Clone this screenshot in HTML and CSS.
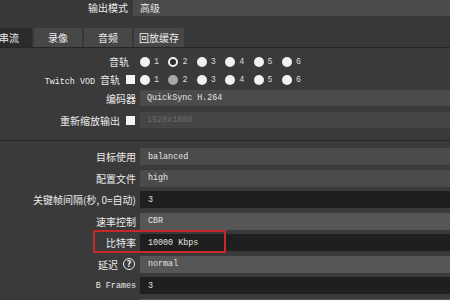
FILE: index.html
```html
<!DOCTYPE html>
<html>
<head>
    <meta charset="UTF-8" />
    <title>输出设置</title>
    <link rel="stylesheet" href="styles.css">
</head>

<body>
<div class="mode-row">
    <div class="mode-label">输出模式</div>
    <div class="field mode-field">高级</div>
</div>

<div class="tab-bar">
    <div class="tab active">串流</div>
    <div class="tab">录像</div>
    <div class="tab">音频</div>
    <div class="tab">回放缓存</div>
</div>

<div class="panel">
    <div class="form-top">
        <div class="row radio-row">
            <div class="label track-label">音轨</div>
            <div class="radios">
                <span class="radio-item"><span class="radio"></span>1</span>
                <span class="radio-item"><span class="radio checked"></span>2</span>
                <span class="radio-item"><span class="radio"></span>3</span>
                <span class="radio-item"><span class="radio"></span>4</span>
                <span class="radio-item"><span class="radio"></span>5</span>
                <span class="radio-item"><span class="radio"></span>6</span>
            </div>
        </div>
        <div class="row radio-row">
            <div class="label"><span class="label-text"><span class="latin">Twitch VOD </span>音轨</span><span class="checkbox"></span></div>
            <div class="radios">
                <span class="radio-item"><span class="radio"></span>1</span>
                <span class="radio-item"><span class="radio dim"></span>2</span>
                <span class="radio-item"><span class="radio"></span>3</span>
                <span class="radio-item"><span class="radio"></span>4</span>
                <span class="radio-item"><span class="radio"></span>5</span>
                <span class="radio-item"><span class="radio"></span>6</span>
            </div>
        </div>
        <div class="row field-row encoder-row">
            <div class="label">编码器</div>
            <div class="field">QuickSync H.264</div>
        </div>
        <div class="row field-row rescale-row">
            <div class="label">重新缩放输出<span class="checkbox"></span></div>
            <div class="field disabled">1920x1080</div>
        </div>
    </div>

    <div class="separator"></div>

    <div class="form-bottom">
        <div class="label">目标使用</div>
        <div class="field">balanced</div>

        <div class="label">配置文件</div>
        <div class="field">high</div>

        <div class="label">关键帧间隔(秒, 0=自动)</div>
        <div class="field spin">3</div>

        <div class="label">速率控制</div>
        <div class="field light">CBR</div>

        <div class="label highlight">比特率<span class="mark"></span></div>
        <div class="field spin">10000 Kbps</div>

        <div class="label">延迟<span class="help">?</span></div>
        <div class="field light">normal</div>

        <div class="label"><span class="latin">B Frames</span></div>
        <div class="field spin">3</div>

        <div class="label"></div>
        <div class="field light"></div>
    </div>
</div>
</body>
</html>
```

FILE: styles.css
```css
* {
    margin: 0;
    padding: 0;
    box-sizing: border-box;
}

:root {
    --bg: #3a3a3a;
    --top-bg: #383838;
    --field-bg: #4b4b4b;
    --field-light: #565656;
    --spin-bg: #1f1f1f;
    --tab-bg: #474747;
    --tab-active: #2b2b2b;
    --line: #262626;
    --text: #ececec;
    --mark: #c8282c;
}

body {
    width: 450px;
    height: 300px;
    overflow: hidden;
    background-color: var(--top-bg);
    color: var(--text);
    font-family: "Noto Sans CJK SC", "Noto Sans", sans-serif;
    font-size: 10px;
}

.latin,
.field,
.radio-item {
    font-family: "Liberation Mono", "DejaVu Sans Mono", monospace;
    font-size: 8.4px;
}

.latin {
    white-space: pre;
}

/* Output mode */
.mode-row {
    display: flex;
    align-items: center;
    height: 15px;
}

.mode-label {
    width: 128px;
    text-align: right;
}

.mode-field {
    flex: 1;
    height: 15px;
    margin-left: 5px;
    padding-left: 8px;
    font-family: "Noto Sans CJK SC", sans-serif;
    font-size: 10px;
}

/* Tabs */
.tab-bar {
    display: flex;
    gap: 2px;
    margin-top: 13px;
    height: 20px;
    border-bottom: 1px solid var(--line);
}

.tab {
    width: 48px;
    height: 19px;
    display: flex;
    align-items: center;
    justify-content: center;
    background-color: var(--tab-bg);
    border-radius: 2px 2px 0 0;
}

.tab.active {
    width: 33px;
    margin-left: -1px;
    justify-content: flex-start;
    background-color: var(--tab-active);
}

.tab:last-child {
    width: 50px;
}

/* Panel */
.panel {
    background-color: var(--bg);
    height: 252px;
    padding-top: 4px;
    overflow: hidden;
}

.row {
    display: flex;
    align-items: center;
}

.label {
    width: 136px;
    flex-shrink: 0;
    display: flex;
    align-items: center;
    justify-content: flex-end;
    white-space: nowrap;
}

.label-text {
    display: block;
    margin-top: 1px;
}

.radio-row {
    height: 18px;
}

.track-label {
    padding-right: 7px;
}

.checkbox {
    width: 9px;
    height: 9px;
    margin-left: 6px;
    margin-right: 1px;
    background-color: #f4f4f4;
}

.radios {
    display: flex;
    margin-left: 4px;
    margin-top: 2px;
}

.radio-item {
    width: 28.4px;
    display: flex;
    align-items: center;
    gap: 4px;
    color: #dcdcdc;
}

.radio {
    width: 10px;
    height: 10px;
    border-radius: 50%;
    background-color: #f2f2f2;
}

.radio.checked {
    background-color: #2a2a2a;
    border: 2px solid #f2f2f2;
}

.radio.dim {
    background-color: #a8a8a8;
}

.field-row .field {
    flex: 1;
    margin-left: 4px;
}

.encoder-row {
    margin-top: 2px;
}

.rescale-row {
    margin-top: 6px;
}

.field {
    height: 16px;
    display: flex;
    align-items: center;
    padding-left: 7px;
    background-color: var(--field-bg);
    border-radius: 1px;
    color: #e4e4e4;
    white-space: nowrap;
}

.field.disabled {
    background-color: #454545;
    color: #6c6c6c;
}

.field.light {
    background-color: var(--field-light);
}

.field.spin {
    background-color: var(--spin-bg);
}

.separator {
    height: 1px;
    margin-top: 12px;
    background-color: var(--line);
}

/* Stream settings */
.form-bottom {
    display: grid;
    grid-template-columns: 136px 1fr;
    grid-auto-rows: 17px;
    column-gap: 4px;
    row-gap: 4.5px;
    margin-top: 7px;
}

.form-bottom .field {
    height: 17px;
    padding-left: 8px;
}

.help {
    width: 12px;
    height: 12px;
    margin-left: 5px;
    margin-right: 1px;
    border: 1.5px solid #eeeeee;
    border-radius: 50%;
    display: flex;
    align-items: center;
    justify-content: center;
    font-family: "DejaVu Sans", sans-serif;
    font-size: 8px;
    font-weight: bold;
}

/* Red annotation around the bitrate row */
.highlight {
    position: relative;
}

.mark {
    position: absolute;
    left: 93px;
    top: -4px;
    width: 133px;
    height: 23px;
    border: 2px solid var(--mark);
    pointer-events: none;
}
```
